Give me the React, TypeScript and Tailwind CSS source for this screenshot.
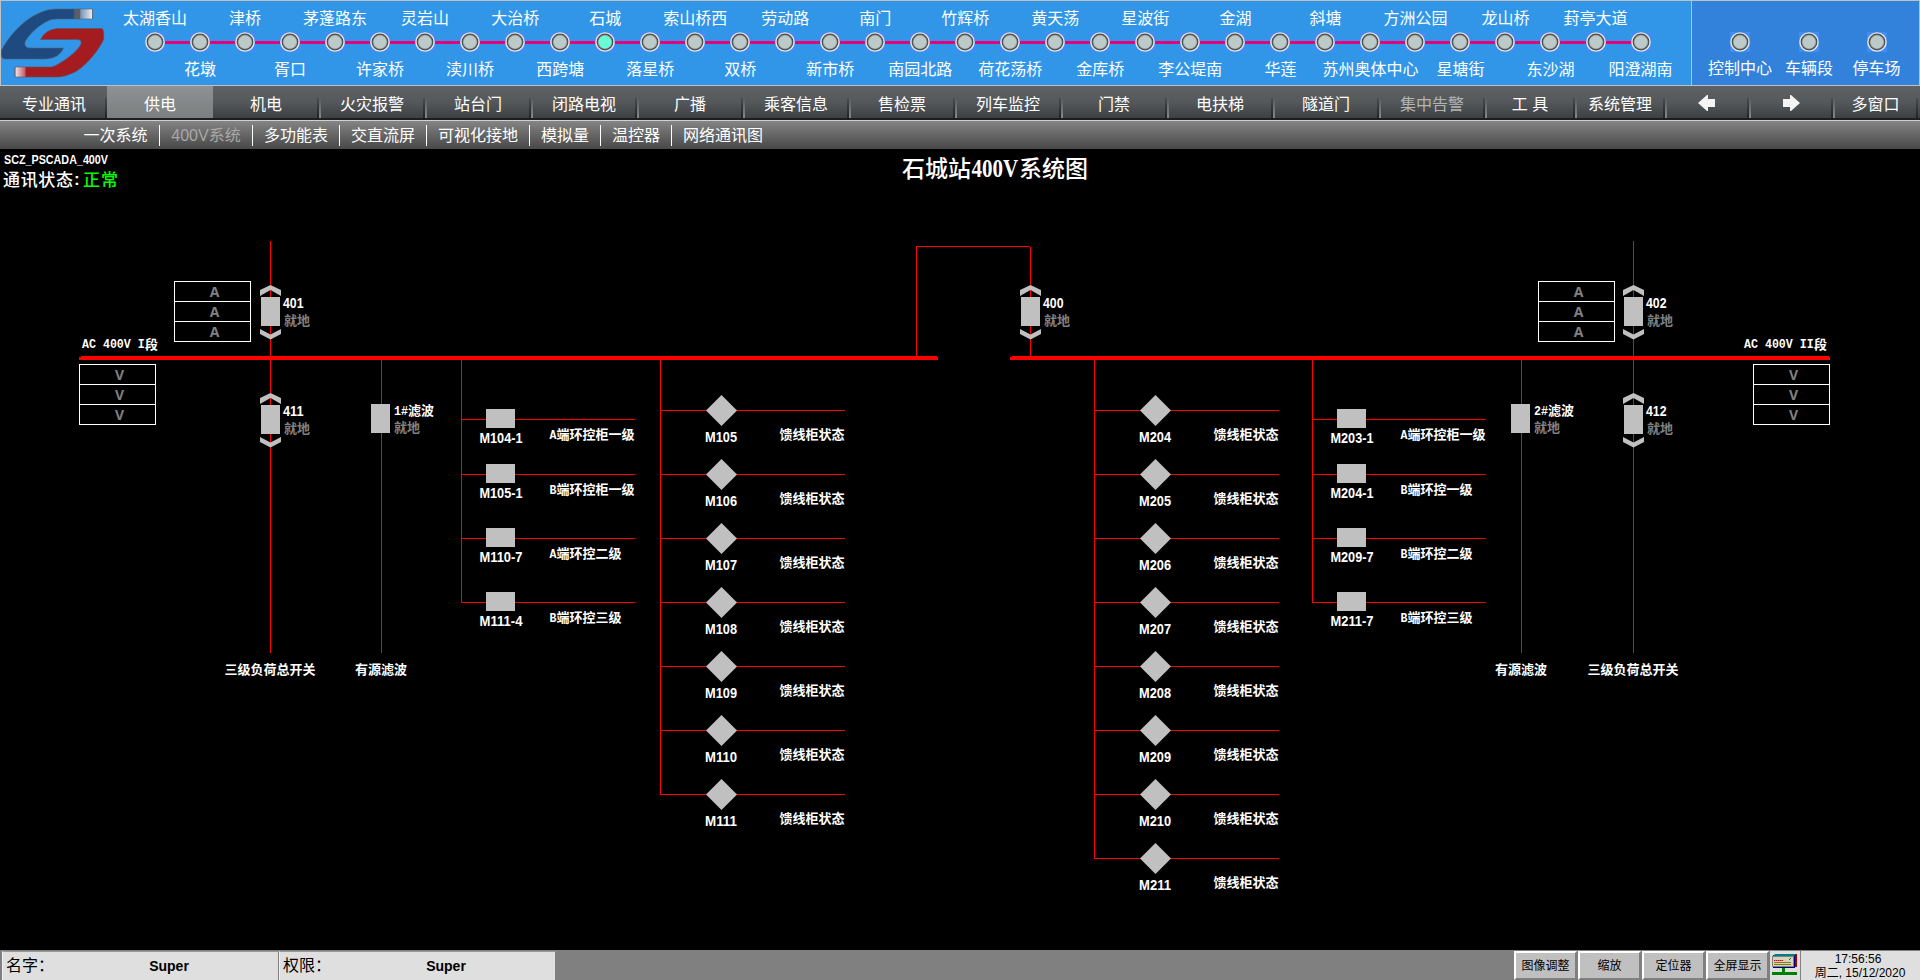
import React from "react";

const CJK = "font-['Liberation_Sans','Noto_Sans_CJK_SC',sans-serif]";

const stations = [
  "太湖香山", "花墩", "津桥", "胥口", "茅蓬路东", "许家桥", "灵岩山", "渎川桥", "大治桥",
  "西跨塘", "石城", "落星桥", "索山桥西", "双桥", "劳动路", "新市桥", "南门", "南园北路",
  "竹辉桥", "荷花荡桥", "黄天荡", "金库桥", "星波街", "李公堤南", "金湖", "华莲", "斜塘",
  "苏州奥体中心", "方洲公园", "星塘街", "龙山桥", "东沙湖", "葑亭大道", "阳澄湖南",
];

function Bulb({ active = false }: { active?: boolean }) {
  return (
    <svg viewBox="0 0 20 20" className="size-5 shrink-0 bg-[#418cf5]">
      <circle cx="10" cy="10" r="9.8" fill="#e4e8ea" />
      <circle cx="10" cy="10" r="8.4" fill="#4c4f51" />
      <circle cx="10" cy="10" r="7.2" fill="#9aa0a0" />
      <circle cx="10" cy="10" r="6.3" fill={active ? "#66ffd6" : "#bccaca"} />
    </svg>
  );
}

function Logo() {
  return (
    <svg viewBox="0 0 106 84" className="h-[84px] w-[106px] shrink-0">
      <defs>
        <linearGradient id="lb" gradientUnits="userSpaceOnUse" x1="73" x2="92" y1="0" y2="0">
          <stop offset="0" stopColor="#1e4a80" />
          <stop offset="0.1" stopColor="#585c6a" />
          <stop offset="0.38" stopColor="#5a5c6a" />
          <stop offset="0.4" stopColor="#7d94b4" />
          <stop offset="1" stopColor="#e6ecf5" />
        </linearGradient>
        <linearGradient id="lr" gradientUnits="userSpaceOnUse" x1="15" x2="27" y1="0" y2="0">
          <stop offset="0" stopColor="#fbeaec" />
          <stop offset="0.85" stopColor="#c25c62" />
          <stop offset="0.9" stopColor="#a41c20" />
        </linearGradient>
      </defs>
      <path
        transform="translate(-1 -1)"
        d="M92.5 9H56C48 9 41 12 35 15C20 23 8 38 1.500 50Q0 59 5 59H46Q60 58 63.500 48H30Q24 48 25 42C29 34 40 24 50 20Q53 19 58 19H92.500Z"
        fill="url(#lb)"
        stroke="#55606c"
        strokeWidth="0.6"
      />
      <path
        transform="translate(-1 -1)"
        d="M40.500 39.500Q45 30 57 28.500H102Q104 29 103.800 39C98 52 84 68 73 73Q64 77 58 77H15V67H51Q56 66 60 63C70 57 79 49 81 44Q82 40 78 39.500Z"
        fill="url(#lr)"
        stroke="#5c5458"
        strokeWidth="0.6"
      />
      <path transform="translate(-1 -1)" d="M92.500 9V19M15 67V77" stroke="#606468" strokeWidth="0.8" />
    </svg>
  );
}

function LineHeader() {
  return (
    <header className="flex h-[86px] border-y border-l border-[#c0c0c0] bg-[#3296e8] text-base leading-6 text-white">
      <Logo />
      <div className="relative flex grow pl-[25.500px]">
        <div className="absolute top-[40px] left-[48px] h-[3px] w-[1486px] bg-[#e6007e]" />
        {stations.map((name, i) => (
          <div
            key={name}
            className={`relative flex w-[45.030px] shrink-0 flex-col items-center whitespace-nowrap ${
              i % 2 ? "pt-[31px]" : "pt-[6px]"
            }`}
          >
            {i % 2 === 0 && <span className="mb-px h-6">{name}</span>}
            <Bulb active={i === 10} />
            {i % 2 === 1 && <span className="mt-[6px] h-6">{name}</span>}
          </div>
        ))}
      </div>
      <div className="relative flex w-[229px] shrink-0 border-x border-[#c0c0c0] bg-[#3282dc] pt-[31px]">
        {[
          ["控制中心", "w-[96px]"],
          ["车辆段", "w-[42px]"],
          ["停车场", "w-[93px]"],
        ].map(([name, width]) => (
          <div key={name} className={`flex shrink-0 flex-col items-center whitespace-nowrap ${width}`}>
            <Bulb />
            <span className="mt-[5px]">{name}</span>
          </div>
        ))}
      </div>
    </header>
  );
}

function Arrow({ flip = false }: { flip?: boolean }) {
  return (
    <svg viewBox="0 0 17 16" className={`mb-1 h-4 w-[17px] ${flip ? "-scale-x-100" : "mr-0.5"}`}>
      <path d="M0 8L9 0H10V4H17V12H10V16H9Z" fill="#f4f4f4" />
    </svg>
  );
}

const tabs: [React.ReactNode, string][] = [
  ["专业通讯", "w-[106px]"], ["供电", "w-[106px]"], ["机电", "w-[106px]"], ["火灾报警", "w-[106px]"],
  ["站台门", "w-[106px]"], ["闭路电视", "w-[106px]"], ["广播", "w-[106px]"], ["乘客信息", "w-[106px]"],
  ["售检票", "w-[106px]"], ["列车监控", "w-[106px]"], ["门禁", "w-[106px]"], ["电扶梯", "w-[106px]"],
  ["隧道门", "w-[106px]"], ["集中告警", "w-[106px]"], ["工 具", "w-[90px]"], ["系统管理", "w-[90px]"],
  [<Arrow />, "w-[84px]"], [<Arrow flip />, "w-[84px]"], ["多窗口", "w-[85px]"],
];

function MainMenu() {
  return (
    <nav className="flex h-[34px] border-b-2 border-[#1c1e20] bg-linear-to-b from-[#5f6365] via-[#55585b] to-[#3c4043] pl-px text-base text-white">
      {tabs.map(([label, width], i) => (
        <div
          key={i}
          className={`relative flex h-full shrink-0 items-center justify-center pt-1.5 ${width} ${
            i === 1 ? "bg-linear-to-b from-[#8e9293] to-[#7c7e80]" : ""
          } ${i === 13 ? "text-[#b4b4b4]" : ""}`}
        >
          {label}
          {i !== 1 && (
            <i className="absolute right-0 bottom-0 h-5 w-0.5 bg-linear-to-b from-[#4a4d50] to-[#202224]" />
          )}
          {i > 2 && (
            <i className="absolute bottom-0 left-0 h-5 w-0.5 bg-linear-to-b from-[#5a5d60] to-[#85888a]" />
          )}
        </div>
      ))}
    </nav>
  );
}

const subTabs: [string, string][] = [
  ["一次系统", "w-[88px]"], ["400V系统", "w-[93px]"], ["多功能表", "w-[87px]"], ["交直流屏", "w-[87px]"],
  ["可视化接地", "w-[103px]"], ["模拟量", "w-[71px]"], ["温控器", "w-[71px]"], ["网络通讯图", "w-[102px]"],
];

function SubMenu() {
  return (
    <nav className="flex h-[29px] items-center border-t border-[#d0d0d0] bg-linear-to-b from-[#858585] to-[#484848] pl-[72px] text-base text-white">
      {subTabs.map(([label, width], i) => (
        <div
          key={label}
          className={`flex h-[21px] shrink-0 items-center justify-center pt-0.5 whitespace-nowrap ${width} ${
            i < 7 ? "border-r border-white" : ""
          } ${i === 1 ? "text-[#a8a8a8]" : ""}`}
        >
          {label}
        </div>
      ))}
    </nav>
  );
}

const RED = "#ff0000";

function Wire({ x, y, w = 1, h = 1 }: { x: number; y: number; w?: number; h?: number }) {
  return <rect x={x} y={y} width={w} height={h} fill={RED} />;
}

function T({
  x, y, w, size = 13, fill = "#fff", children,
}: { x: number; y: number; w: number; size?: number; fill?: string; children: string }) {
  return (
    <text
      x={x}
      y={y}
      fontSize={size}
      fill={fill}
      textLength={w}
      lengthAdjust="spacingAndGlyphs"
      className={`font-bold ${CJK}`}
    >
      {children}
    </text>
  );
}

function Mixed({ x, y, latin, cjk }: { x: number; y: number; latin: string; cjk: string }) {
  const w = latin.length * 7;
  return (
    <g className="font-bold">
      <text
        transform={`translate(${x} ${y - 0.5}) scale(0.93 1)`}
        fontSize={12.5}
        fill="#fff"
        xmlSpace="preserve"
        className="font-['Liberation_Mono',monospace] whitespace-pre"
      >
        {latin}
      </text>
      <T x={x + w} y={y} w={cjk.length * 13}>{cjk}</T>
    </g>
  );
}

function Meter({ x, y, unit }: { x: number; y: number; unit: string }) {
  return (
    <g>
      {[0, 1, 2].map((i) => (
        <g key={i}>
          <rect x={x + 0.5} y={y + 0.5 + i * 20} width={76} height={20} fill="none" stroke="#fff" />
          <text x={x + 40.5} y={y + 16 + i * 20} fontSize={14} textAnchor="middle" fill="#808080" className="font-['Open_Sans',sans-serif] font-bold">
            {unit}
          </text>
        </g>
      ))}
    </g>
  );
}

function Breaker({ x, y, name }: { x: number; y: number; name: string }) {
  return (
    <g fill="#c0c0c0">
      <path d={`M${x - 10} ${y - 7}L${x + 0.5} ${y - 12}L${x + 11} ${y - 7}V${y - 1}L${x + 0.5} ${y - 7}L${x - 10} ${y - 1}Z`} />
      <rect x={x - 9} y={y} width={19} height={29} />
      <path d={`M${x - 10} ${y + 37}L${x + 0.5} ${y + 42.5}L${x + 11} ${y + 37}V${y + 32}L${x + 0.5} ${y + 37.5}L${x - 10} ${y + 32}Z`} />
      <T x={x + 13} y={y + 11} w={20.5} size={14}>{name}</T>
      <T x={x + 14} y={y + 28} w={26} fill="#808080">就地</T>
    </g>
  );
}

function Filter({ x, no }: { x: number; no: string }) {
  return (
    <g>
      <Wire x={x} y={360} h={293} />
      <rect x={x - 10} y={404} width={19} height={29} fill="#c0c0c0" />
      <Mixed x={x + 13} y={415} latin={no} cjk="滤波" />
      <T x={x + 13} y={432} w={26} fill="#808080">就地</T>
      <T x={x - 26} y={674} w={52}>有源滤波</T>
    </g>
  );
}

function Cabinets({ x, rows }: { x: number; rows: [string, string, string][] }) {
  const ys = [419, 474, 538, 602];
  return (
    <g>
      <Wire x={x} y={360} h={243} />
      {rows.map(([id, latin, cjk], i) => (
        <g key={id}>
          <Wire x={x} y={ys[i]} w={174} />
          <rect x={x + 25} y={ys[i] - 10} width={29} height={19} fill="#c0c0c0" />
          <T x={x + 18.5} y={ys[i] + 24} w={43} size={14}>{id}</T>
          <Mixed x={x + 88.5} y={ys[i] + 20} latin={latin} cjk={cjk} />
        </g>
      ))}
    </g>
  );
}

function Feeders({ x, first, count }: { x: number; first: number; count: number }) {
  return (
    <g>
      <Wire x={x} y={360} h={51 + (count - 1) * 64} />
      {Array.from({ length: count }, (_, i) => {
        const y = 410 + i * 64;
        const cx = x + 61.5;
        return (
          <g key={i}>
            <Wire x={x} y={y} w={185} />
            <path d={`M${cx} ${y - 15}L${cx + 15.5} ${y + 0.5}L${cx} ${y + 16}L${cx - 15.5} ${y + 0.5}Z`} fill="#c0c0c0" />
            <T x={x + 45} y={y + 32} w={32} size={14}>{`M${first + i}`}</T>
            <T x={x + 119.5} y={y + 29} w={65}>馈线柜状态</T>
          </g>
        );
      })}
    </g>
  );
}

function Schematic() {
  return (
    <svg viewBox="0 149 1920 801" className="block h-[801px] w-[1920px] bg-black">
      <T x={4} y={164} w={104} size={12}>SCZ_PSCADA_400V</T>
      <g className={`font-medium ${CJK}`} fontSize={17}>
        <text x={3} y={186} textLength={70} fill="#fff">通讯状态</text>
        <text x={74} y={185} fill="#fff" className="font-bold">:</text>
        <text x={83} y={186} textLength={35} fill="#00ff00">正常</text>
      </g>
      <g className="font-['Noto_Sans_CJK_SC',sans-serif] font-medium" fontSize={23} fill="#fff">
        <text x={902} y={177}>石城站</text>
        <text transform="translate(971.5 177) scale(0.84 1)" fontSize={25} className="font-['Liberation_Serif',serif] font-bold">400V</text>
        <text x={1019} y={177}>系统图</text>
      </g>

      <Wire x={270} y={241} h={412} />
      <Wire x={1633} y={241} h={412} />
      <Wire x={916} y={246} h={111} />
      <Wire x={916} y={246} w={114} />
      <Wire x={1030} y={247} h={110} />

      <Cabinets
        x={461}
        rows={[
          ["M104-1", "A", "端环控柜一级"],
          ["M105-1", "B", "端环控柜一级"],
          ["M110-7", "A", "端环控二级"],
          ["M111-4", "B", "端环控三级"],
        ]}
      />
      <Feeders x={660} first={105} count={7} />
      <Feeders x={1094} first={204} count={8} />
      <Cabinets
        x={1312}
        rows={[
          ["M203-1", "A", "端环控柜一级"],
          ["M204-1", "B", "端环控一级"],
          ["M209-7", "B", "端环控二级"],
          ["M211-7", "B", "端环控三级"],
        ]}
      />
      <Filter x={381} no="1#" />
      <Filter x={1521} no="2#" />

      <path d="M79 357H81V356H937V357H938V360H79Z" fill={RED} />
      <path d="M1010 357H1012V356H1829V357H1830V360H1010Z" fill={RED} />

      <Breaker x={270} y={297} name="401" />
      <Breaker x={270} y={405} name="411" />
      <Breaker x={1030} y={297} name="400" />
      <Breaker x={1633} y={297} name="402" />
      <Breaker x={1633} y={405} name="412" />

      <Meter x={174} y={281} unit="A" />
      <Meter x={79} y={364} unit="V" />
      <Meter x={1538} y={281} unit="A" />
      <Meter x={1753} y={364} unit="V" />

      <Mixed x={82} y={348.5} latin="AC 400V I" cjk="段" />
      <Mixed x={1744} y={348.5} latin="AC 400V II" cjk="段" />
      <T x={224.5} y={674} w={91}>三级负荷总开关</T>
      <T x={1587.5} y={674} w={91}>三级负荷总开关</T>
    </svg>
  );
}

function NetworkIcon() {
  return (
    <svg viewBox="0 0 26 22" className="h-[22px] w-[26px]">
      <path d="M3 0H25V13H23V3H3Z" fill="#a00000" />
      <rect x="1" y="1" width="22" height="13" fill="#000080" />
      <path d="M3 0H24L22 2H1Z" fill="#008080" />
      <rect x="0" y="2" width="22" height="11" fill="#808080" />
      <rect x="1" y="3" width="20" height="9" fill="#d4d4c0" />
      <path d="M2 6.500H11" stroke="#ff0000" strokeDasharray="1.500 0.500" />
      <path d="M2 8.500H19M2 10.500H19" stroke="#808000" />
      <path d="M17 6L19 4" stroke="#008000" />
      <path d="M0 18H10V14H13V18H25V21H0Z" fill="#008000" />
    </svg>
  );
}

function StatusBar() {
  return (
    <footer className="flex h-[30px] border-t border-[#808080] bg-[#808080] pl-0.5 text-black">
      {["名字：", "权限："].map((label) => (
        <div key={label} className="flex w-[277px] shrink-0 items-center border-t border-r border-l border-t-[#989898] border-r-[#808080] border-l-[#f0f0f0] bg-[#dfdfdf] pl-[3px]">
          <span className="w-[101px] text-base">{label}</span>
          <span className="w-[124px] text-center text-[14px] font-bold">Super</span>
        </div>
      ))}
      <div className="ml-auto flex">
        {["图像调整", "缩放", "定位器", "全屏显示"].map((label) => (
          <button
            key={label}
            className="mr-px flex w-[63px] shrink-0 items-center justify-center border-2 border-t-white border-r-[#808080] border-b-[#808080] border-l-white bg-[#c0c0c0] text-[12px]"
          >
            {label}
          </button>
        ))}
        <div className="flex w-[31px] items-center justify-center border-r border-[#808080] bg-[#dfdfdf] pb-0.5">
          <NetworkIcon />
        </div>
        <div className="flex w-[119px] flex-col items-center justify-center bg-[#dfdfdf] pr-px text-[12px] leading-[14px]">
          <span className="pr-1">17:56:56</span>
          <span>周二, 15/12/2020</span>
        </div>
      </div>
    </footer>
  );
}

export default function App() {
  return (
    <div className={`flex h-[980px] w-[1920px] flex-col overflow-hidden bg-black ${CJK}`}>
      <LineHeader />
      <MainMenu />
      <SubMenu />
      <Schematic />
      <StatusBar />
    </div>
  );
}
